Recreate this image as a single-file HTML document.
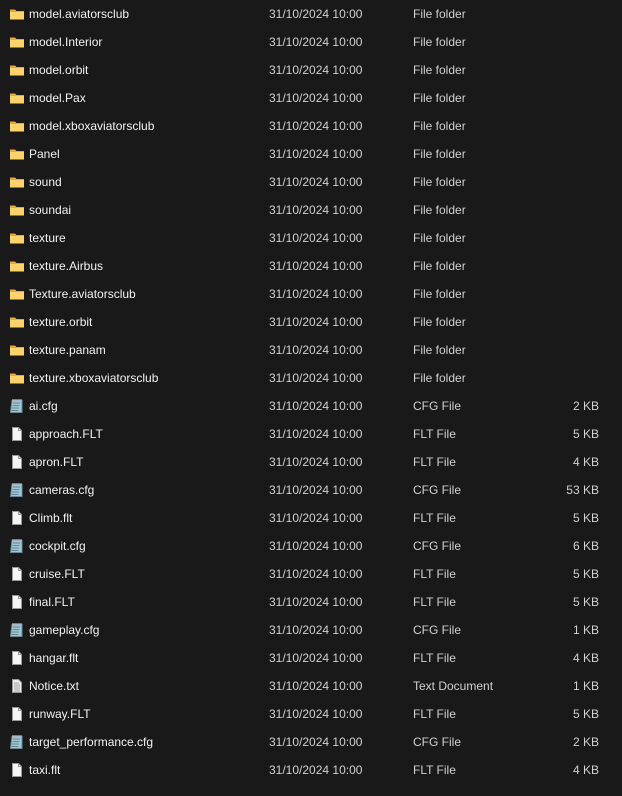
<!DOCTYPE html>
<html><head><meta charset="utf-8"><style>
body{margin:0;width:622px;height:796px;background:#191919;overflow:hidden;font-family:"Liberation Sans",sans-serif;font-size:12px;}
.r{position:absolute;left:0;width:622px;height:28px;}
.r span{position:absolute;top:7px;white-space:nowrap;line-height:14px}
.n{left:29px;color:#f2f2f2}
.d{left:269px;color:#d0d0d0}
.t{left:413px;color:#d0d0d0}
.s{right:23px;color:#d0d0d0}
.ic{position:absolute;left:9px;top:6px;width:16px;height:16px}
</style></head><body>
<svg width="0" height="0" style="position:absolute">
<defs>
<symbol id="fo" viewBox="0 0 16 16"><path d="M1 3.5h5l1.5 1.5H15v8.5H1z" fill="#e8a93a"/><path d="M1 6h14v7.5H1z" fill="#ffd36b"/></symbol>
<symbol id="fi" viewBox="0 0 16 16"><path d="M3.5 1.5h6l3 3v10h-9z" fill="#f5f5f5" stroke="#9a9a9a"/><path d="M9.5 1.5v3h3" fill="none" stroke="#9a9a9a"/></symbol>
<symbol id="cf" viewBox="0 0 16 16"><path d="M3 2.5h10v12H1.5z" fill="#9fc7d6" stroke="#6a8a96"/><path d="M4 5h7M3.5 7.5h7M3 10h7M2.5 12.5h7" stroke="#4d7382" stroke-width=".8"/><path d="M4 1v2M6 1v2M8 1v2M10 1v2M12 1v2" stroke="#ddd"/></symbol>
<symbol id="tx" viewBox="0 0 16 16"><path d="M3.5 1.5h6l3 3v10h-9z" fill="#eee" stroke="#999"/><path d="M5 5h5M5 7h6M5 9h6M5 11h6M5 13h6" stroke="#888" stroke-width=".8"/></symbol>
</defs></svg>
<div id="c"></div>
<script>
const rows=[
["fo","model.aviatorsclub","File folder",""],["fo","model.Interior","File folder",""],["fo","model.orbit","File folder",""],["fo","model.Pax","File folder",""],["fo","model.xboxaviatorsclub","File folder",""],["fo","Panel","File folder",""],["fo","sound","File folder",""],["fo","soundai","File folder",""],["fo","texture","File folder",""],["fo","texture.Airbus","File folder",""],["fo","Texture.aviatorsclub","File folder",""],["fo","texture.orbit","File folder",""],["fo","texture.panam","File folder",""],["fo","texture.xboxaviatorsclub","File folder",""],
["cf","ai.cfg","CFG File","2 KB"],["fi","approach.FLT","FLT File","5 KB"],["fi","apron.FLT","FLT File","4 KB"],["cf","cameras.cfg","CFG File","53 KB"],["fi","Climb.flt","FLT File","5 KB"],["cf","cockpit.cfg","CFG File","6 KB"],["fi","cruise.FLT","FLT File","5 KB"],["fi","final.FLT","FLT File","5 KB"],["cf","gameplay.cfg","CFG File","1 KB"],["fi","hangar.flt","FLT File","4 KB"],["tx","Notice.txt","Text Document","1 KB"],["fi","runway.FLT","FLT File","5 KB"],["cf","target_performance.cfg","CFG File","2 KB"],["fi","taxi.flt","FLT File","4 KB"]];
let h="";rows.forEach((r,i)=>{h+=`<div class="r" style="top:${i*28}px"><svg class="ic"><use href="#${r[0]}"/></svg><span class="n">${r[1]}</span><span class="d">31/10/2024 10:00</span><span class="t">${r[2]}</span><span class="s">${r[3]}</span></div>`});
document.getElementById("c").innerHTML=h;
</script>
</body></html>
